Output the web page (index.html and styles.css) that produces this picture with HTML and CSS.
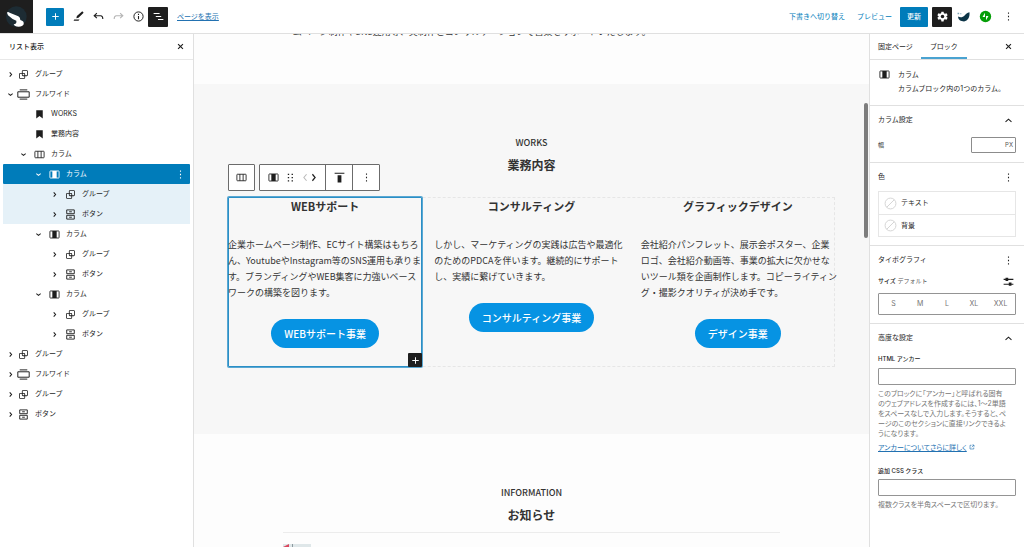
FILE: index.html
```html
<!DOCTYPE html>
<html lang="ja">
<head>
<meta charset="utf-8">
<title>ページを編集</title>
<meta name="viewport" content="width=device-width, initial-scale=1">
<link rel="stylesheet" href="styles.css">
</head>
<body>
<svg class="sprite" aria-hidden="true">
  <symbol id="i-right" viewBox="0 0 24 24"><path d="M10.500 8l3.500 4-3.500 4" fill="none" stroke="currentColor" stroke-width="2"/></symbol>
  <symbol id="i-left" viewBox="0 0 24 24"><path d="M14 6l-5 6 5 6" fill="none" stroke="currentColor" stroke-width="2"/></symbol>
  <symbol id="i-next" viewBox="0 0 24 24"><path d="M10 6l5 6-5 6" fill="none" stroke="currentColor" stroke-width="2.200"/></symbol>
  <symbol id="i-down" viewBox="0 0 24 24"><path d="M8 10.500l4 3 4-3" fill="none" stroke="currentColor" stroke-width="2"/></symbol>
  <symbol id="i-up" viewBox="0 0 24 24"><path d="M6.500 14.500L12 9.500l5.500 5" fill="none" stroke="currentColor" stroke-width="2"/></symbol>
  <symbol id="i-close" viewBox="0 0 24 24"><path d="M7.500 7.500l9 9M16.500 7.500l-9 9" fill="none" stroke="currentColor" stroke-width="2"/></symbol>
  <symbol id="i-plus" viewBox="0 0 24 24"><path d="M12 6v12M6 12h12" fill="none" stroke="currentColor" stroke-width="1.800"/></symbol>
  <symbol id="i-dots" viewBox="0 0 24 24"><path d="M11 4.500h2v2.500h-2zM11 10.800h2v2.500h-2zM11 17h2v2.500h-2z" fill="currentColor"/></symbol>
  <symbol id="i-group" viewBox="0 0 24 24"><path d="M18 4h-7c-1.100 0-2 .9-2 2v3H6c-1.100 0-2 .9-2 2v7c0 1.100.9 2 2 2h7c1.100 0 2-.9 2-2v-3h3c1.100 0 2-.9 2-2V6c0-1.100-.9-2-2-2zm-4.500 14c0 .3-.2.5-.5.5H6c-.3 0-.5-.2-.5-.5v-7c0-.3.2-.5.5-.5h3V13c0 1.100.9 2 2 2h2.500v3zm0-4.500H11c-.3 0-.5-.2-.5-.5v-2.500H13c.3 0 .5.2.5.5v2.500zm5-.5c0 .3-.2.5-.5.5h-3V11c0-1.100-.9-2-2-2h-2.500V6c0-.3.2-.5.5-.5h7c.3 0 .5.2.5.5v7z" fill="currentColor"/></symbol>
  <symbol id="i-wide" viewBox="0 0 24 24"><path d="M1.500 7h21v10h-21zM5 3.500h14M5 20.500h14" fill="none" stroke="currentColor" stroke-width="1.800"/></symbol>
  <symbol id="i-heading" viewBox="0 0 24 24"><path d="M6 4.200v15.400l6-4.800 6 4.800V4.200z" fill="currentColor"/></symbol>
  <symbol id="i-columns" viewBox="0 0 24 24"><path d="M4.500 6h15q1 0 1 1v10q0 1-1 1h-15q-1 0-1-1V7q0-1 1-1zM9 6v12M15 6v12" fill="none" stroke="currentColor" stroke-width="1.600"/></symbol>
  <symbol id="i-column" viewBox="0 0 24 24"><path d="M4.500 5.500h15q1 0 1 1v11q0 1-1 1h-15q-1 0-1-1v-11q0-1 1-1z" fill="none" stroke="currentColor" stroke-width="1.600"/><path d="M8 5.500h8v13H8z" fill="currentColor"/></symbol>
  <symbol id="i-buttons" viewBox="0 0 24 24"><path d="M5 3.500h14v7H5zM5 13.500h14v7H5zM9.500 7h5M9.500 17h5" fill="none" stroke="currentColor" stroke-width="1.700"/></symbol>
</svg>

<header class="topbar">
  <a class="logo" href="#" aria-label="サイト">
    <svg viewBox="0 0 99 99"><circle cx="49" cy="50" r="31" fill="#1d2c34"/><path d="M21 38Q23 34 29 38L55 49Q61 52 61 60Q73 63 71 73Q68 80 56 80Q43 80 41 73Q51 72 49 62Q36 58 24 46Z" fill="#fff"/></svg>
  </a>
  <div class="tools">
    <button class="tool tool-blue" aria-label="ブロックを追加"><svg class="icon"><use href="#i-plus"/></svg></button>
    <button class="tool" aria-label="ツール"><svg class="icon" viewBox="0 0 24 24"><path d="M8 15l1-4L19 2.500l2.500 2.500L12 14.500zM4 17.500h10l-2 2.500H3z" fill="#1e1e1e"/></svg></button>
    <button class="tool" aria-label="元に戻す"><svg class="icon" viewBox="0 0 24 24"><path d="M9 6l-5 4.500L9 15M4.500 10.500H16q4 0 4 6" fill="none" stroke="#1e1e1e" stroke-width="2"/></svg></button>
    <button class="tool" aria-label="やり直す" disabled><svg class="icon" viewBox="0 0 24 24"><path d="M15 6l5 4.500-5 4.500M19.500 10.500H8q-4 0-4 6" fill="none" stroke="#b5b5b5" stroke-width="2"/></svg></button>
    <button class="tool" aria-label="詳細"><svg class="icon" viewBox="0 0 24 24"><circle cx="12" cy="12" r="8.500" fill="none" stroke="#1e1e1e" stroke-width="1.800"/><path d="M12 11v6M12 7v2" stroke="#1e1e1e" stroke-width="2"/></svg></button>
    <button class="tool tool-black" aria-label="リスト表示" aria-pressed="true"><svg class="icon" viewBox="0 0 24 24"><path d="M3 6.500h11M7 12h10M11 17.500h10" stroke="#fff" stroke-width="2"/></svg></button>
    <a class="view-link" href="#">ページを表示</a>
  </div>
  <div class="actions">
    <button class="text-button">下書きへ切り替え</button>
    <button class="text-button">プレビュー</button>
    <button class="update">更新</button>
    <button class="tool tool-black" aria-label="設定" aria-pressed="true"><svg class="icon" viewBox="0 0 24 24"><path d="M10 3h4l.6 3 2 1.100L19.500 6l2 3.500-2.300 2v1l2.300 2-2 3.500-2.900-1.100-2 1.100-.6 3h-4l-.6-3-2-1.100L4.500 18l-2-3.500 2.300-2v-1l-2.300-2 2-3.500 2.900 1.100 2-1.100z" fill="#fff"/><circle cx="12" cy="12" r="3.200" fill="#1e1e1e"/></svg></button>
    <button class="tool plugin" aria-label="SEO"><svg class="icon" viewBox="0 0 24 24"><path d="M2 12c5 3 9 1 12-2 2-3 5-5 9-6 1 9-3 16-10 17C7 21 2 18 2 12z" fill="#0b3447"/><path d="M1 5h3v3H1zM6 6h2v2H6z" fill="#7fa6b8"/></svg></button>
    <button class="tool plugin" aria-label="Jetpack"><svg class="icon" viewBox="0 0 24 24"><circle cx="12" cy="12" r="10.500" fill="#069e08"/><path d="M11 5v8H6.500zM13 19v-8h4.500z" fill="#fff"/></svg></button>
    <button class="tool more" aria-label="オプション"><svg class="icon"><use href="#i-dots"/></svg></button>
  </div>
</header>

<div class="workspace">
  <aside class="outline">
    <div class="outline-head">
      <h2 class="outline-title">リスト表示</h2>
      <button class="bare" aria-label="閉じる"><svg class="icon"><use href="#i-close"/></svg></button>
    </div>
    <ul class="tree">
      <li><button class="row"><svg class="chev"><use href="#i-right"/></svg><svg class="icon"><use href="#i-group"/></svg>グループ</button></li>
      <li><button class="row"><svg class="chev"><use href="#i-down"/></svg><svg class="icon"><use href="#i-wide"/></svg>フルワイド</button></li>
      <li><button class="row level-1"><span class="chev"></span><svg class="icon"><use href="#i-heading"/></svg>WORKS</button></li>
      <li><button class="row level-1"><span class="chev"></span><svg class="icon"><use href="#i-heading"/></svg>業務内容</button></li>
      <li><button class="row level-1"><svg class="chev"><use href="#i-down"/></svg><svg class="icon"><use href="#i-columns"/></svg>カラム</button></li>
      <li><button class="row level-2 selected"><svg class="chev"><use href="#i-down"/></svg><svg class="icon"><use href="#i-column"/></svg>カラム<svg class="icon row-more"><use href="#i-dots"/></svg></button></li>
      <li><button class="row level-3 branch"><svg class="chev"><use href="#i-right"/></svg><svg class="icon"><use href="#i-group"/></svg>グループ</button></li>
      <li><button class="row level-3 branch"><svg class="chev"><use href="#i-right"/></svg><svg class="icon"><use href="#i-buttons"/></svg>ボタン</button></li>
      <li><button class="row level-2"><svg class="chev"><use href="#i-down"/></svg><svg class="icon"><use href="#i-column"/></svg>カラム</button></li>
      <li><button class="row level-3"><svg class="chev"><use href="#i-right"/></svg><svg class="icon"><use href="#i-group"/></svg>グループ</button></li>
      <li><button class="row level-3"><svg class="chev"><use href="#i-right"/></svg><svg class="icon"><use href="#i-buttons"/></svg>ボタン</button></li>
      <li><button class="row level-2"><svg class="chev"><use href="#i-down"/></svg><svg class="icon"><use href="#i-column"/></svg>カラム</button></li>
      <li><button class="row level-3"><svg class="chev"><use href="#i-right"/></svg><svg class="icon"><use href="#i-group"/></svg>グループ</button></li>
      <li><button class="row level-3"><svg class="chev"><use href="#i-right"/></svg><svg class="icon"><use href="#i-buttons"/></svg>ボタン</button></li>
      <li><button class="row"><svg class="chev"><use href="#i-right"/></svg><svg class="icon"><use href="#i-group"/></svg>グループ</button></li>
      <li><button class="row"><svg class="chev"><use href="#i-right"/></svg><svg class="icon"><use href="#i-wide"/></svg>フルワイド</button></li>
      <li><button class="row"><svg class="chev"><use href="#i-right"/></svg><svg class="icon"><use href="#i-group"/></svg>グループ</button></li>
      <li><button class="row"><svg class="chev"><use href="#i-right"/></svg><svg class="icon"><use href="#i-buttons"/></svg>ボタン</button></li>
    </ul>
  </aside>

  <main class="canvas">
    <section class="intro">
      <p>ームページ制作やSNS運用等、実制作とコンサルテーションで営業をサポートいたします。</p>
    </section>

    <section class="band works">
      <p class="eyebrow">WORKS</p>
      <h2 class="title">業務内容</h2>
      <div class="columns">
        <div class="toolbar">
          <div class="toolbar-group"><button aria-label="親ブロックを選択"><svg class="icon"><use href="#i-columns"/></svg></button></div>
          <div class="toolbar-group">
            <div class="toolbar-set">
              <button class="slim" aria-label="カラム"><svg class="icon"><use href="#i-column"/></svg></button>
              <button class="slim" aria-label="ドラッグ"><svg class="icon" viewBox="0 0 24 24"><path d="M7 5h2.500v2.500H7zM14 5h2.500v2.500H14zM7 11h2.500v2.500H7zM14 11h2.500v2.500H14zM7 17h2.500v2.500H7zM14 17h2.500v2.500H14z" fill="currentColor"/></svg></button>
              <span class="movers"><button aria-label="左に移動" disabled><svg class="icon"><use href="#i-left"/></svg></button><button aria-label="右に移動"><svg class="icon"><use href="#i-next"/></svg></button></span>
            </div>
            <button aria-label="上揃え"><svg class="icon" viewBox="0 0 24 24"><path d="M3 3h18v2H3zM8.500 8h7v13h-7z" fill="currentColor"/></svg></button>
            <button aria-label="オプション"><svg class="icon"><use href="#i-dots"/></svg></button>
          </div>
        </div>

        <article class="column active">
          <h3>WEBサポート</h3>
          <p>企業ホームページ制作、ECサイト構築はもちろ<br>ん、YoutubeやInstagram等のSNS運用も承りま<br>す。ブランディングやWEB集客に力強いベース<br>ワークの構築を図ります。</p>
          <a class="pill" href="#">WEBサポート事業</a>
          <button class="appender" aria-label="ブロックを追加"><svg class="icon"><use href="#i-plus"/></svg></button>
        </article>
        <article class="column">
          <h3>コンサルティング</h3>
          <p>しかし、マーケティングの実践は広告や最適化<br>のためのPDCAを伴います。継続的にサポート<br>し、実績に繋げていきます。</p>
          <a class="pill" href="#">コンサルティング事業</a>
        </article>
        <article class="column">
          <h3>グラフィックデザイン</h3>
          <p>会社紹介パンフレット、展示会ポスター、企業<br>ロゴ、会社紹介動画等、事業の拡大に欠かせな<br>いツール類を企画制作します。コピーライティン<br>グ・撮影クオリティが決め手です。</p>
          <a class="pill" href="#">デザイン事業</a>
        </article>
      </div>
    </section>

    <section class="band news">
      <p class="eyebrow">INFORMATION</p>
      <h2 class="title">お知らせ</h2>
      <div class="news-list">
        <svg class="thumb" viewBox="0 0 28 19"><path fill="#dfe7e9" d="M0 0h28v19H0z"/><path fill="#d9485f" d="M0 3l6-3v19H0z"/><path fill="#8d9aa0" d="M9 0h1v19H9z"/></svg>
      </div>
    </section>
    <span class="scroll-thumb"></span>
  </main>

  <aside class="inspector">
    <div class="tabs">
      <button class="tab">固定ページ</button>
      <button class="tab current">ブロック</button>
      <button class="bare" aria-label="閉じる"><svg class="icon"><use href="#i-close"/></svg></button>
    </div>
    <div class="card">
      <svg class="icon"><use href="#i-column"/></svg>
      <div>
        <h2>カラム</h2>
        <p>カラムブロック内の1つのカラム。</p>
      </div>
    </div>
    <section class="panel">
      <div class="panel-head"><h2>カラム設定</h2><button class="bare" aria-label="折りたたむ"><svg class="icon"><use href="#i-up"/></svg></button></div>
      <div class="width-row"><label for="width">幅</label><span class="unit-box"><input id="width" type="text"><span>PX</span></span></div>
    </section>
    <section class="panel">
      <div class="panel-head"><h2>色</h2><button class="bare" aria-label="色オプション"><svg class="icon"><use href="#i-dots"/></svg></button></div>
      <div class="colors">
        <button><svg class="icon swatch" viewBox="0 0 24 24"><circle cx="12" cy="12" r="10" fill="none" stroke="#ccc" stroke-width="1.500"/><path d="M5 19L19 5" stroke="#ccc" stroke-width="1.500"/></svg>テキスト</button>
        <button><svg class="icon swatch" viewBox="0 0 24 24"><circle cx="12" cy="12" r="10" fill="none" stroke="#ccc" stroke-width="1.500"/><path d="M5 19L19 5" stroke="#ccc" stroke-width="1.500"/></svg>背景</button>
      </div>
    </section>
    <section class="panel">
      <div class="panel-head"><h2>タイポグラフィ</h2><button class="bare" aria-label="タイポグラフィオプション"><svg class="icon"><use href="#i-dots"/></svg></button></div>
      <div class="size-head"><p><b>サイズ</b> デフォルト</p><button class="bare" aria-label="カスタムサイズ"><svg class="icon" viewBox="0 0 24 24"><path d="M3 8h18M3 17h18" stroke="currentColor" stroke-width="2"/><path d="M6.500 5h5v6h-5zM12.500 14h5v6h-5z" fill="currentColor"/></svg></button></div>
      <div class="sizes"><button>S</button><button>M</button><button>L</button><button>XL</button><button>XXL</button></div>
    </section>
    <section class="panel">
      <div class="panel-head"><h2>高度な設定</h2><button class="bare" aria-label="折りたたむ"><svg class="icon"><use href="#i-up"/></svg></button></div>
      <label class="field-label" for="anchor">HTML アンカー</label>
      <input class="field" id="anchor" type="text">
      <p class="help">このブロックに「アンカー」と呼ばれる固有<br>のウェブアドレスを作成するには、1〜2単語<br>をスペースなしで入力します。そうすると、ペ<br>ージのこのセクションに直接リンクできるよ<br>うになります。</p>
      <p class="help"><a href="#">アンカーについてさらに詳しく</a><svg class="external" viewBox="0 0 24 24"><path d="M10 5H4v15h15v-6M13 4h7v7M20 4l-9 9" fill="none" stroke="#2271b1" stroke-width="2.500"/></svg></p>
      <label class="field-label second" for="css-class">追加 CSS クラス</label>
      <input class="field" id="css-class" type="text">
      <p class="help">複数クラスを半角スペースで区切ります。</p>
    </section>
  </aside>
</div>
</body>
</html>
```
FILE: styles.css
```css
* { box-sizing: border-box; margin: 0; padding: 0; }

body {
  display: flex;
  flex-direction: column;
  height: 100vh;
  overflow: hidden;
  background: #fff;
  color: #1e1e1e;
  font: 7px/14px Inter, "Noto Sans CJK JP", sans-serif;
}

button, input { font: inherit; color: inherit; border: 0; background: none; border-radius: 0; }
button { display: flex; align-items: center; justify-content: center; white-space: nowrap; }
h2, h3 { font-size: inherit; font-weight: 400; }
ul { list-style: none; }

.sprite { display: none; }
.icon, .chev { width: 13px; height: 13px; flex: none; display: block; }

/* Top bar */
.topbar { display: flex; align-items: center; flex: none; height: 34px; border-bottom: 1px solid #e0e0e0; }
.logo { align-self: stretch; width: 33px; background: #1e1e1e; }
.logo svg { display: block; width: 33px; height: 33px; }
.tools { display: flex; align-items: center; margin-left: 13px; }
.tool { width: 20px; height: 20px; }
.tool-blue { width: 18px; height: 18px; margin-right: 4px; border-radius: 1px; background: #007cba; color: #fff; }
.tool-black { border-radius: 1px; background: #1e1e1e; color: #fff; }
.view-link { margin-left: 9px; color: #2271b1; }
.actions { display: flex; align-items: center; margin-left: auto; padding-right: 6px; }
.text-button { margin-right: 12px; color: #007cba; }
.update { width: 28px; height: 20px; margin: 0 4px 0 -4px; border-radius: 1px; background: #007cba; color: #fff; font-weight: 500; }
.plugin { width: 22px; }
.more { margin-left: 2px; }

/* Work area */
.workspace { display: flex; flex: 1; min-height: 0; }

.outline { width: 194px; flex: none; border-right: 1px solid #e0e0e0; }
.outline-head { display: flex; align-items: center; justify-content: space-between; height: 26px; padding: 0 6px 0 9px; border-bottom: 1px solid #e8e8e8; }
.outline-title { font-weight: 500; }
.tree { padding: 4px 3px; }
.row { width: 100%; height: 20px; justify-content: flex-start; padding-left: 1px; }
.row .icon { margin-right: 5px; }
.level-1 { padding-left: 14px; }
.level-2 { padding-left: 29px; }
.level-3 { padding-left: 45px; }
.level-1 .chev, .level-2 .chev, .level-3 .chev { margin-right: 3px; }
.selected { border-radius: 1px; background: #007cba; color: #fff; }
.row .row-more { margin: 0 3px 0 auto; }
.branch { background: #e5f1f8; }

/* Canvas */
.canvas { position: relative; flex: 1; min-width: 0; overflow: hidden; background: #fdfdfd; color: #333; font: 9px/16px "Noto Sans CJK JP", sans-serif; }
.intro { margin-top: -10px; padding: 0 34px 44px 90px; white-space: nowrap; }
.band { padding: 51px 34px 67px; }
.works { background: #f7f7f7; }
.eyebrow { margin-bottom: 4px; text-align: center; font-weight: 500; }
.title { text-align: center; font-size: 12px; line-height: 20px; font-weight: 700; }
.columns { position: relative; display: grid; grid-template-columns: repeat(3, 1fr); gap: 12px; margin-top: 22px; outline: 1px dashed #e6e6e6; outline-offset: -1px; }
.column { display: flex; flex-direction: column; align-items: center; padding-bottom: 19px; min-width: 0; }
.column h3 { margin-bottom: 22px; font-size: 11px; line-height: 18px; font-weight: 700; }
.column p { align-self: stretch; margin-bottom: 18px; white-space: nowrap; }
.pill { padding: 0 13px; border-radius: 15px; background: #0693e3; color: #fff; font-size: 10px; line-height: 29px; font-weight: 500; text-decoration: none; white-space: nowrap; }
.active { position: relative; box-shadow: 0 0 0 1px #5aa8d3, inset 0 0 0 1px #2b8fc6; border-radius: 1px; }
.appender { position: absolute; right: 0; bottom: 0; width: 14px; height: 14px; border-radius: 1px; background: #1e1e1e; color: #fff; }

.toolbar { position: absolute; left: 0; bottom: calc(100% + 6px); display: flex; gap: 4px; color: #1e1e1e; }
.toolbar-group { display: flex; height: 27px; border: 1px solid #6b6b6b; border-radius: 1px; background: #fff; }
.toolbar button { width: 25px; }
.toolbar-group > * + * { border-left: 1px solid #6b6b6b; }
.toolbar-group > * + button { width: 27px; }
.toolbar-set { display: flex; padding: 0 8px 0 5px; }
.toolbar .slim { width: 17px; }
.movers { display: flex; margin-left: 2px; }
.toolbar .movers button { width: 8px; }
.movers button:disabled { color: #bbb; }

.news { padding-bottom: 0; }
.news-list { max-width: 497px; margin: 7px auto 0; padding-top: 11px; border-top: 1px solid #ececec; }
.thumb { display: block; width: 28px; height: 19px; }
.scroll-thumb { position: absolute; top: 69px; right: 1px; width: 4px; height: 135px; border-radius: 2px; background: #7d7d7d; }

/* Inspector */
.inspector { width: 155px; flex: none; border-left: 1px solid #e0e0e0; overflow: hidden; }
.tabs { display: flex; align-items: stretch; height: 26px; border-bottom: 1px solid #e0e0e0; }
.tab { padding: 0 8px; }
.current { padding: 0 9px; border-bottom: 2px solid #4aa3d1; border-top: 2px solid transparent; }
.tabs .bare { margin: 0 9px 0 auto; }
.card { display: flex; gap: 7px; padding: 8px 8px 9px; border-bottom: 1px solid #e0e0e0; white-space: nowrap; }
.panel { padding: 7px 8px 8px; border-bottom: 1px solid #e0e0e0; }
.panel:last-child { border-bottom: 0; }
.panel-head, .size-head { display: flex; align-items: center; justify-content: space-between; height: 14px; padding-right: 1px; }
.width-row { display: flex; align-items: center; justify-content: space-between; margin: 10px 0 1px; font-size: 6px; }
.unit-box { display: flex; align-items: center; width: 45px; height: 16px; padding-right: 2px; border: 1px solid #8c8c8c; border-radius: 1px; font-size: 6px; color: #555; }
.unit-box input { flex: 1; min-width: 0; height: 14px; }
.colors { margin-top: 7px; border: 1px solid #e6e6e6; }
.colors button { width: 100%; height: 22px; justify-content: flex-start; gap: 4px; padding-left: 5px; }
.colors button + button { border-top: 1px solid #e6e6e6; }
.size-head { margin: 7px 0 5px; font-size: 6px; color: #555; }
.size-head b { font-weight: 500; color: #1e1e1e; }
.size-head .bare { color: #1e1e1e; }
.sizes { display: flex; height: 22px; padding: 0 1px; border: 1px solid #949494; border-radius: 1px; }
.sizes button { flex: 1; color: #757575; }
.field-label { display: block; margin: 10px 0 5px; font-size: 6px; line-height: 8px; font-weight: 500; }
.second { margin: 14px 0 4px; }
.field { display: block; width: 100%; height: 17px; padding: 0 4px; border: 1px solid #949494; border-radius: 1px; }
.help { margin-top: 4px; line-height: 10px; color: #757575; white-space: nowrap; font-feature-settings: "palt"; }
.help a { color: #2271b1; }
.external { width: 6px; height: 6px; margin-left: 2px; }
```
